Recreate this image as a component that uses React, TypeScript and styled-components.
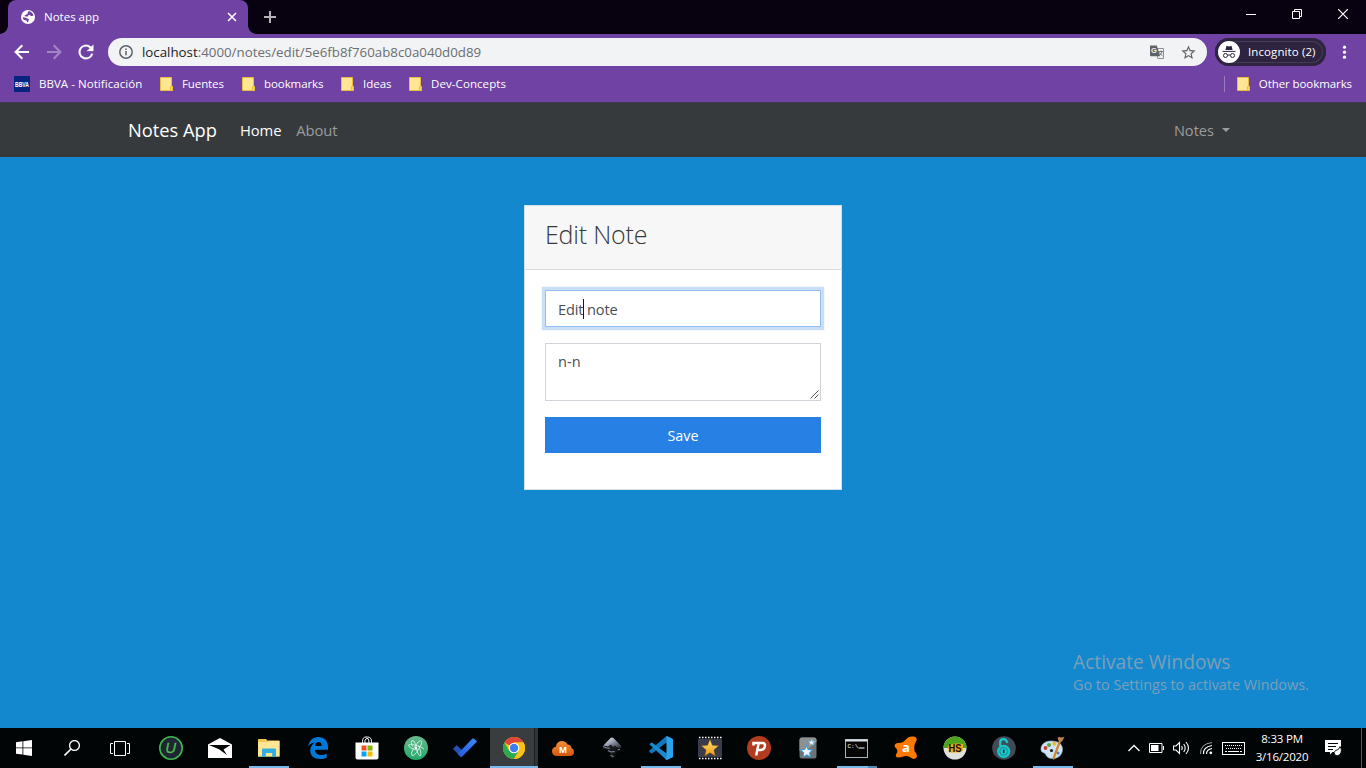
import React from 'react';
import styled, { createGlobalStyle } from 'styled-components';

const GlobalStyle = createGlobalStyle`
  * { box-sizing: border-box; }
  body {
    margin: 0;
    overflow: hidden;
    font-family: "Open Sans", "Noto Sans", sans-serif;
  }
  svg { display: block; flex: none; }
`;

const Screen = styled.div`
  position: relative;
  display: flex;
  flex-direction: column;
  width: 1366px;
  height: 768px;
  background: #1488cf;
`;

/* ---------- Browser ---------- */

const TitleBar = styled.header`
  display: flex;
  height: 34px;
  background: #080210;
  color: #fff;
`;

const Tab = styled.div`
  position: relative;
  display: flex;
  align-items: center;
  width: 240px;
  margin-left: 8px;
  padding: 0 10px 0 13px;
  background: #6f42a3;
  border-radius: 8px 8px 0 0;

  &::before,
  &::after {
    content: '';
    position: absolute;
    bottom: 0;
    width: 8px;
    height: 8px;
  }
  &::before {
    left: -8px;
    background: radial-gradient(circle at 0 0, transparent 7.5px, #6f42a3 8px);
  }
  &::after {
    right: -8px;
    background: radial-gradient(circle at 100% 0, transparent 7.5px, #6f42a3 8px);
  }
`;

const TabTitle = styled.span`
  flex: 1;
  margin-left: 9px;
  padding-bottom: 2px;
  font-size: 11.5px;
`;

const NewTab = styled.div`
  display: flex;
  align-items: center;
  margin-left: 15px;
`;

const WindowButtons = styled.div`
  display: flex;
  margin-left: auto;
`;

const WindowButton = styled.div`
  display: flex;
  justify-content: center;
  width: 46px;
  padding-top: 9px;
`;

const Toolbar = styled.div`
  display: flex;
  align-items: center;
  height: 36px;
  padding-left: 11px;
  background: #6f42a3;
  color: #fff;
`;

const NavButtons = styled.div`
  display: flex;
  gap: 10px;
  margin-right: 11px;
`;

const AddressBar = styled.div`
  display: flex;
  align-items: center;
  width: 1099px;
  height: 28px;
  padding: 0 10px;
  border-radius: 14px;
  background: #f1f3f4;
  color: #5f6368;
`;

const Url = styled.span`
  flex: 1;
  margin-left: 8px;
  color: #6b6e72;
  font-size: 13.3px;
  line-height: 20px;

  b {
    color: #202124;
    font-weight: 400;
  }
`;

const OmniboxActions = styled.div`
  display: flex;
  align-items: center;
  gap: 15px;
`;

const IncognitoPill = styled.div`
  display: flex;
  align-items: center;
  width: 111px;
  height: 28px;
  margin: 0 10px 0 8px;
  padding: 0 3px;
  border-radius: 14px;
  background: #2e2440;
  box-shadow: inset 0 0 0 3px #2e2440, inset 0 0 0 4px #453b57;
`;

const IncognitoLabel = styled.span`
  padding-bottom: 2px;
  font-size: 11.5px;
  letter-spacing: 0.1px;
`;

const IncognitoBadge = styled.div`
  display: flex;
  align-items: center;
  justify-content: center;
  width: 22px;
  height: 22px;
  margin-right: 8px;
  border-radius: 50%;
  background: #fff;
`;

const BookmarksBar = styled.div`
  display: flex;
  height: 32px;
  padding: 0 14px;
  background: #6f42a3;
`;

const Bookmark = styled.div<{ $width?: number }>`
  display: flex;
  align-items: center;
  gap: 9px;
  height: 28px;
  width: ${(p) => (p.$width ? `${p.$width}px` : 'auto')};
`;

const BookmarkLabel = styled.span<{ $spacing?: number }>`
  padding-bottom: 2px;
  color: #fff;
  font-size: 11.5px;
  letter-spacing: ${(p) => p.$spacing ?? 0}px;
  white-space: nowrap;
`;

const BookmarkDivider = styled.div`
  width: 1px;
  height: 16px;
  margin: 6px 12px 0 auto;
  background: #9a7bc0;
`;

/* ---------- Page ---------- */

const Navbar = styled.nav`
  display: flex;
  align-items: center;
  height: 55px;
  padding: 0 136px 0 128px;
  border-top: 1px solid #41374e;
  background: #373a3c;
`;

const Brand = styled.span`
  width: 112px;
  padding-bottom: 2px;
  color: #fff;
  font-size: 18.3px;
`;

const NavLink = styled.span<{ $active?: boolean }>`
  margin-right: 15px;
  color: ${(p) => (p.$active ? '#fff' : '#9b9c9d')};
  font-size: 14.8px;
  letter-spacing: -0.12px;
`;

const NavDropdown = styled.div`
  display: flex;
  align-items: center;
  gap: 8px;
  margin-left: auto;
  color: #9b9c9d;
  font-size: 14.6px;
`;

const Caret = styled.i`
  border: 4.5px solid transparent;
  border-top-color: #9b9c9d;
  border-bottom: 0;
`;

const Main = styled.main`
  display: flex;
  flex: 1;
  align-items: flex-start;
  justify-content: center;
  padding-top: 48px;
`;

const Card = styled.section`
  width: 318px;
  height: 285px;
  border: 1px solid #d3dfe6;
  background: #fff;
`;

const CardHeader = styled.header`
  height: 64px;
  padding: 11px 20px;
  border-bottom: 1px solid #d9dadb;
  background: #f7f7f7;
`;

const CardTitle = styled.h4`
  margin: 0;
  color: #373a3c;
  font-size: 25px;
  font-weight: 300;
  line-height: 34px;
  letter-spacing: -0.2px;
`;

const CardBody = styled.div`
  display: flex;
  flex-direction: column;
  gap: 16px;
  padding: 20px;
`;

const Field = styled.div<{ $height: number; $focused?: boolean }>`
  position: relative;
  display: flex;
  height: ${(p) => p.$height}px;
  padding: ${(p) => (p.$focused ? 6 : 5)}px 12px;
  border: 1px solid ${(p) => (p.$focused ? '#93c0f1' : '#ced4da')};
  background: #fff;
  box-shadow: ${(p) => (p.$focused ? '0 0 0 3.2px rgba(39, 128, 227, 0.25)' : 'none')};
  color: #495057;
  font-size: 14.6px;
  line-height: 24px;
  letter-spacing: ${(p) => (p.$focused ? -0.15 : 0)}px;
  white-space: pre;
`;

const TextCaret = styled.i`
  width: 1px;
  height: 20px;
  margin: 2px -1px 0 0;
  background: #16181a;
`;

const ResizeGrip = styled.svg`
  position: absolute;
  right: 1px;
  bottom: 1px;
`;

const SaveButton = styled.div`
  height: 36px;
  background: #2780e3;
  color: #fff;
  font-size: 14.4px;
  line-height: 37px;
  text-align: center;
`;

const Watermark = styled.div`
  position: absolute;
  top: 649px;
  left: 1073px;
  color: #7b9fb8;
  font-size: 14.4px;
  line-height: 20px;
  white-space: nowrap;

  strong {
    display: block;
    font-size: 19.2px;
    font-weight: 400;
    line-height: 26px;
  }
`;

/* ---------- Taskbar ---------- */

const Taskbar = styled.footer`
  display: flex;
  height: 40px;
  background: #020505;
  color: #fff;
`;

const SystemButton = styled.div`
  display: flex;
  align-items: center;
  justify-content: center;
  width: 48px;
`;

const Apps = styled.div`
  display: flex;
  margin-left: 2px;
`;

const AppButton = styled.div<{ $running?: boolean; $active?: boolean; $stacked?: boolean }>`
  position: relative;
  display: flex;
  align-items: center;
  justify-content: center;
  width: 49px;

  &::before {
    content: '';
    position: absolute;
    z-index: 0;
    inset: 0 0 0 ${(p) => (p.$active ? '1px' : '0')};
    background: ${(p) => (p.$active ? 'linear-gradient(90deg, #393d3f 44px, #1c2022 44px, #1c2022 45px, #303435 45px)' : 'none')};
  }
  &::after {
    content: '';
    position: absolute;
    bottom: 0;
    left: ${(p) => (p.$active ? 1 : 5)}px;
    right: ${(p) => (p.$active ? 0 : 4)}px;
    height: 2px;
    display: ${(p) => (p.$running ? 'block' : 'none')};
    background: ${(p) => (p.$stacked ? 'linear-gradient(270deg, #5388ba 9px, #76b9ed 9px)' : '#76b9ed')};
  }
  svg { position: relative; }
`;

const Tray = styled.div`
  display: flex;
  align-items: center;
  margin-left: auto;
`;

const TrayIcons = styled.div`
  display: flex;
  align-items: center;
  gap: 9px;
`;

const Clock = styled.div`
  width: 74px;
  padding-bottom: 1px;
  font-size: 11.5px;
  line-height: 18px;
  letter-spacing: -0.2px;
  text-align: center;
`;

const Notifications = styled.div`
  margin-left: 6px;
  margin-right: 19px;
`;

const ShowDesktop = styled.div`
  width: 5px;
  height: 40px;
  border-left: 1px solid #56595a;
`;

/* ---------- Icons ---------- */

const GlobeIcon = () => (
  <svg width="14" height="14" viewBox="0 0 14 14">
    <circle cx="7" cy="7" r="7" fill="#fff" />
    <path
      d="M7 1.500Q9.400.8 11.400 3.200L12.500 5.200Q11 6.600 9.600 5.800L8.800 4.800 7 5.400 7.200 6.600H5L3 6 4.200 5.200 6.800 3.600Z"
      fill="#6f42a3"
    />
    <path d="M1.600 7.200 5 7.800 7.900 9.200 7.600 10.800 6.400 12.600 5.400 10.600 2.600 9.800Z" fill="#6f42a3" />
  </svg>
);

const FolderIcon = () => (
  <svg width="13" height="14" viewBox="0 0 13 14">
    <path d="M.5.5h11v9h1v4H.5z" fill="#ffe692" stroke="#e9bd3d" />
    <path d="M10.500 13.500v-4h2v4z" fill="#fbd765" stroke="#e9bd3d" />
  </svg>
);

const BbvaIcon = () => (
  <svg width="16" height="16" viewBox="0 0 16 16" overflow="visible">
    <rect width="16" height="16" fill="#072481" />
    <text x="1" y="10.800" fill="#fff" fontFamily="Liberation Sans, sans-serif" fontSize="7" fontWeight="700" textLength="14" lengthAdjust="spacingAndGlyphs">
      BBVA
    </text>
  </svg>
);

const IncognitoIcon = () => (
  <svg width="14" height="14" viewBox="0 0 14 14" fill="none">
    <path d="M3.400 5 4.500.8 7 1.400 9.500.8 10.600 5Z" fill="#2e2440" />
    <path d="M.5 6.400h13" stroke="#2e2440" strokeWidth="1" />
    <circle cx="3.500" cy="10.500" r="2" stroke="#2e2440" />
    <circle cx="10.500" cy="10.500" r="2" stroke="#2e2440" />
    <path d="M5.500 10.300q1.500-.8 3 0" stroke="#2e2440" />
  </svg>
);

const TranslateIcon = () => (
  <svg width="16" height="16" viewBox="0 0 16 16">
    <path d="M6.500 4.500h8v10H8.800z" fill="#f1f3f4" stroke="#8b8e92" />
    <path d="M1.500 1.500h6.300l3.400 10.800H1.500Q1 12 1 11.300V2Q1 1.500 1.500 1.500Z" fill="#5f6368" />
    <text x="5" y="9.400" fill="#f1f3f4" fontFamily="Liberation Sans, sans-serif" fontSize="7.500" fontWeight="700" textAnchor="middle">G</text>
    <path d="M9.500 7.500h4.500M11.800 6.500v1M13 7.800Q12.500 10 10.500 11.200M10.500 8.500q1 2 3 3.200" fill="none" stroke="#777a7e" />
  </svg>
);

const WindowsIcon = () => (
  <svg width="16" height="16" viewBox="0 0 16 16" fill="#fff">
    <path d="M0 2.200 6.500 1.300V7.500H0zM7.300 1.200 16 0V7.500H7.300zM0 8.300H6.500V14.600L0 13.700zM7.300 8.300H16V16L7.300 14.800z" />
  </svg>
);

const SearchIcon = () => (
  <svg width="16" height="16" viewBox="0 0 16 16" fill="none" stroke="#fff" strokeWidth="1.300">
    <circle cx="10.500" cy="5.500" r="4.900" />
    <path d="M7 9 .5 15.500" strokeWidth="1.600" />
  </svg>
);

const TaskViewIcon = () => (
  <svg width="20" height="15" viewBox="0 0 20 15" fill="none" stroke="#fff">
    <path d="M4.500.5h11v14h-11zM3 2.500H.5v10H3M17 2.500h2.500v10H17" />
  </svg>
);

const UninstallerIcon = () => (
  <svg width="24" height="24" viewBox="0 0 24 24">
    <circle cx="12" cy="12" r="11.200" fill="#202435" stroke="#3cb94b" strokeWidth="1.600" />
    <text x="11.700" y="17.300" fill="#49bf45" stroke="#49bf45" strokeWidth=".3" fontFamily="Liberation Sans, sans-serif" fontSize="15" fontStyle="italic" textAnchor="middle">U</text>
  </svg>
);

const MailIcon = () => (
  <svg width="24" height="20" viewBox="0 0 24 20">
    <path d="M0 6.500 12 0 24 6.500V20H0z" fill="#fff" />
    <path d="M1 7H22.500L15.500 11.500 19 17 11 11.200z" fill="#020505" />
  </svg>
);

const ExplorerIcon = () => (
  <svg width="22" height="20" viewBox="0 0 22 20">
    <path d="M0 1.500Q0 1 .600 1H8L9.500 2.500H21Q21.500 2.500 21.500 3V18.500H0z" fill="#f3c74d" />
    <path d="M0 4H10L11.500 3H21.500V18.500H0z" fill="#ffe695" />
    <path d="M4 19V11.500Q4 10.500 5 10.500H17Q18 10.500 18 11.500V19H14.200V15H7.800V19z" fill="#32ade2" />
  </svg>
);

const EdgeIcon = () => (
  <svg width="20" height="22" viewBox="0 0 20 22">
    <path
      d="M.2 9.300C1.200 3.500 5 0 10.300 0 16.300 0 20 4.200 20 10v2.800H6.900C7 16.500 9.800 18 13 18c2.200 0 4-.6 5.700-1.600v4.100C16.900 21.500 14.800 22 12.200 22 6 22 2.200 18.600 2.200 13.500c0-3.600 2-6.600 5-8C4.500 5.700 2 7 .2 9.300ZM7 8.900h6.700C13.700 6.500 12.500 5 10.500 5 8.600 5 7.300 6.500 7 8.900Z"
      fill="#0078d7"
    />
  </svg>
);

const StoreIcon = () => (
  <svg width="24" height="24" viewBox="0 0 24 24">
    <path d="M7.500 8V5.500Q7.500 1 11 1h1.500Q16.500 1 16.500 5.500V8M10 7V4.500Q10.500 2 13 2.500 14 3 14 7" fill="none" stroke="#fff" />
    <path d="M.5 6.500H23.500V21.500Q23.500 23.500 21.500 23.500H2.500Q.5 23.500.5 21.500z" fill="#fff" />
    <path d="M6.500 9.500h5v5h-5z" fill="#f25022" />
    <path d="M12.500 9.500h5v5h-5z" fill="#7fba00" />
    <path d="M6.500 15.500h5v5h-5z" fill="#00a4ef" />
    <path d="M12.500 15.500h5v5h-5z" fill="#ffb900" />
  </svg>
);

const AtomIcon = () => (
  <svg width="24" height="24" viewBox="0 0 24 24">
    <defs>
      <linearGradient id="atom" x2="0" y2="1">
        <stop stopColor="#67b890" />
        <stop offset="1" stopColor="#22aa68" />
      </linearGradient>
    </defs>
    <circle cx="12" cy="12" r="12" fill="url(#atom)" />
    <g fill="none" stroke="#d6f1e2" strokeWidth=".9" strokeLinejoin="round">
      <path d="M8 4.500Q10.500 4 11.500 8.500L13 14.500Q14 19 16 20 17.500 19 16.500 15L14.500 9.500" />
      <path d="M16.500 4.500Q19 5.500 16.500 10L12.500 16.500Q9.500 20.500 8 19.500 6.500 17.500 9 13.500L12 9Q14.500 5 16.500 4.500" />
      <path d="M4.500 9Q5.500 7.500 10.500 9L16 10.500Q20 12 19.500 13.500M4.500 9Q4.500 11.500 9 13L14 14" />
      <path d="M8 4.500Q6.500 6 8.500 10.500" />
    </g>
    <circle cx="12" cy="12" r="1.200" fill="#fff" />
  </svg>
);

const TodoIcon = () => (
  <svg width="24" height="20" viewBox="0 0 24 20">
    <defs>
      <linearGradient id="todo" x1="0" y1="1" x2="1" y2="0">
        <stop stopColor="#2359d8" />
        <stop offset="1" stopColor="#3c8aff" />
      </linearGradient>
    </defs>
    <path d="M3.200 7.400Q3.700 7 4.100 7.400L11 14.300 7.800 18.800.3 11.200Q0 10.900.3 10.500z" fill="#2450b8" />
    <path d="M19.500.4Q20 0 20.500.4L23.700 3Q24 3.400 23.600 3.900L9 18.800Q8.200 19.500 7.300 18.500L4.600 15.700z" fill="url(#todo)" />
  </svg>
);

const ChromeIcon = () => (
  <svg width="22" height="22" viewBox="0 0 22 22">
    <circle cx="11" cy="11" r="11" fill="#fbc116" />
    <path d="M11 11 1.470 5.500A11 11 0 0 1 20.530 5.500H11z" fill="#e0453a" />
    <path d="M1.470 5.500A11 11 0 0 0 11 22L15.760 13.750 11 11 6.240 13.750z" fill="#2da94f" />
    <path d="M20.530 5.500A11 11 0 0 1 11 22L15.760 13.750 11 5.500z" fill="#fbc116" />
    <circle cx="11" cy="11" r="5.300" fill="#fff" />
    <circle cx="11" cy="11" r="4.200" fill="#3d7df0" />
  </svg>
);

const CloudIcon = () => (
  <svg width="22" height="15" viewBox="0 0 22 15">
    <defs>
      <linearGradient id="cloud" x2="0" y2="1">
        <stop stopColor="#f3903a" />
        <stop offset="1" stopColor="#d4570b" />
      </linearGradient>
    </defs>
    <path d="M5 15Q0 14.800 0 10.200 0 6.500 4 5.500 4.500.5 9.500 0 14 0 15.500 3.500 19 3.500 19.500 7 22 8 22 11 22 14.700 18 15z" fill="url(#cloud)" />
    <text x="11" y="12.200" fill="#fff" fontFamily="Liberation Sans, sans-serif" fontSize="9.500" fontWeight="700" textAnchor="middle">M</text>
  </svg>
);

const InkscapeIcon = () => (
  <svg width="20" height="22" viewBox="0 0 20 22">
    <defs>
      <linearGradient id="ink" x2="1" y2="1">
        <stop stopColor="#fff" />
        <stop offset=".5" stopColor="#8d94a8" />
        <stop offset="1" stopColor="#22252c" />
      </linearGradient>
    </defs>
    <path d="M8.600 1Q10 0 11.400 1L19 8.800Q20.500 11 18 12L13.500 13 15.500 15 12 17.500 14 18.800 10.500 21.500 7.500 19 8.500 16 4.500 14.500 7.500 13 1.500 11.800Q-.5 10.800 1 8.800z" fill="#17191d" />
    <path d="M8.600 1Q10 0 11.400 1L19 8.800 18.500 11 14.500 10 13 8.500 11 10 9 7.500 6 9.500 1.500 8.400z" fill="url(#ink)" />
    <path d="M1 9.500Q5 11.800 8 11.200M6 13.500Q9 16 12.500 14.500M8.500 18.500 11.500 19.500M15.500 13 18 12.500" fill="none" stroke="#9aa0ac" strokeWidth=".9" />
  </svg>
);

const VsCodeIcon = () => (
  <svg width="24" height="24" viewBox="0 0 24 24">
    <path d="M17.500 0 23 2.500Q24 3 24 4V6L17.500 6.500 3.300 17.300Q2.700 17.800 2.100 17.300L.4 15.700Q-.2 15 .4 14.400z" fill="#0e77bd" />
    <path d="M.4 8.300 2.100 6.700Q2.700 6.200 3.300 6.700L17.500 17.500 24 18V20Q24 21 23 21.500L17.500 24z" fill="#178bd2" />
    <path d="M17.500 0 23 2.500Q24 3 24 4V20Q24 21 23 21.500L17.500 24 16.500 23 17.500 21V3z" fill="#29a3ee" />
  </svg>
);

const VideoEditorIcon = () => (
  <svg width="24" height="24" viewBox="0 0 24 24">
    <defs>
      <linearGradient id="star" x2="0" y2="1">
        <stop stopColor="#ffe36d" />
        <stop offset="1" stopColor="#f09a17" />
      </linearGradient>
    </defs>
    <rect width="24" height="24" fill="#0a0a0e" />
    <rect y="3" width="24" height="18" fill="#3a3c4b" />
    <path d="M1 1.500H24M1 22.500H24" stroke="#fff" strokeWidth="1.500" strokeDasharray="1.500 1.500" />
    <path d="M12 3.500 14.400 9.300 20.600 9.800 15.900 13.900 17.300 20 12 16.700 6.700 20 8.100 13.900 3.400 9.800 9.600 9.300z" fill="url(#star)" stroke="#7a4b12" strokeWidth=".4" />
  </svg>
);

const PsiphonIcon = () => (
  <svg width="24" height="24" viewBox="0 0 24 24" fill="none">
    <circle cx="12" cy="12" r="12" fill="#b23c1f" />
    <path d="M6.500 9.500V7H15.500Q18.500 7 17.800 10.500 17 14 13.500 14H10.500M11.700 7 9.200 19.500" stroke="#fff" strokeWidth="2.500" />
  </svg>
);

const AnkiIcon = () => (
  <svg width="18" height="22" viewBox="0 0 18 22">
    <rect x=".5" y=".5" width="17" height="21" rx="2.500" fill="#6e7374" />
    <path d="M.5 3Q.5.5 3 .5H15Q17.500.5 17.500 3V5Q10 14 .5 14z" fill="#8b9091" />
    <path d="M7.500 8.500 9 12.500 13.500 13 10.500 15.800 11.500 20 7.800 17.800 4 20 4.800 15.700 1.500 12.900 5.800 12.500z" fill="#e9f6ff" stroke="#2c9de8" />
    <path d="M12.700 2.500 13.500 4.300 15.800 4.500 14.200 6 14.500 8 12.500 7 10.700 8 11 6 9.500 4.500 11.700 4.300z" fill="#e9f6ff" stroke="#69bdf0" strokeWidth=".6" />
  </svg>
);

const TerminalIcon = () => (
  <svg width="23" height="19" viewBox="0 0 23 19">
    <rect x=".5" y=".5" width="22" height="18" fill="#060606" stroke="#a9b4c0" />
    <path d="M.5 1.500h22" stroke="#dbe3ea" strokeWidth="2" />
    <text x="2.500" y="9.300" fill="#fff" fontFamily="Liberation Mono, monospace" fontSize="6">C:\</text>
    <path d="M13.500 9h6" stroke="#fff" />
  </svg>
);

const AvastIcon = () => (
  <svg width="24" height="24" viewBox="0 0 24 24">
    <path d="M19 .5Q22.500.5 22.800 3.500 22.500 5 21 7.500 19.500 11 20.500 15 24 19 22.500 21.500 20.500 24 17.500 22 14 19.500 10.500 20.200 6.500 21.500 3.500 21.500 1 20.800 2.200 18 5.300 14.500.8 11 0 7.500 3.500 7 8.500 7.500 11.500 3.800 14.500 0 19 .5z" fill="#ff7800" />
    <text x="12" y="15.800" fill="#fff" fontFamily="Open Sans, sans-serif" fontSize="13" fontWeight="700" textAnchor="middle">a</text>
  </svg>
);

const HotspotIcon = () => (
  <svg width="24" height="24" viewBox="0 0 24 24">
    <circle cx="12" cy="12" r="11.500" fill="#dfe2da" />
    <path d="M.5 12A11.500 11.500 0 0 1 23.500 12Z" fill="#4da51d" />
    <path d="M5 10Q9 6.500 20 8L20 14.500 17 16.500H6z" fill="#f6a51d" />
    <text x="12" y="15.800" fill="#16120a" fontFamily="Liberation Sans, sans-serif" fontSize="10.500" fontWeight="700" textAnchor="middle" textLength="13" lengthAdjust="spacingAndGlyphs">HS</text>
  </svg>
);

const OpenLockIcon = () => (
  <svg width="24" height="24" viewBox="0 0 24 24" fill="none">
    <circle cx="12" cy="12" r="11.800" fill="#414b56" />
    <path d="M8.200 10V6.200Q8.200 3.200 11.500 3.200 14.500 3.200 15.300 7" stroke="#17c8cf" strokeWidth="2.200" />
    <circle cx="11.700" cy="15.300" r="6.600" fill="#17c8cf" />
    <circle cx="11.700" cy="15.300" r="4" stroke="#2b7d87" strokeWidth=".9" />
    <path d="M11.700 13.500v3.500" stroke="#24343c" strokeWidth="1.700" />
  </svg>
);

const PaintIcon = () => (
  <svg width="25" height="24" viewBox="0 0 25 24">
    <path d="M11 5C4 5 .5 9.500 1 14c.5 3 3.500 2.500 4.500 4C6.500 21 9 23 13.500 22.500 19.500 22 22.500 18 22.500 13 22.500 8 18 5 11 5Z" fill="#cfe4f4" stroke="#8fb5d1" strokeWidth=".6" />
    <circle cx="5.500" cy="12" r="1.900" fill="#cf3b2d" />
    <circle cx="9" cy="9" r="2" fill="#57a83c" />
    <circle cx="14.300" cy="7.800" r="2" fill="#edb82b" />
    <circle cx="11.500" cy="14.500" r="1.600" fill="#182028" />
    <circle cx="18" cy="17" r="1.500" fill="#3c83cf" />
    <path d="M20 5 13.500 22.500" stroke="#d5832d" strokeWidth="2.200" strokeLinecap="round" />
    <path d="M17.500 2Q19 .5 21 1.500L24.500 1 22 5.500 19 5.500z" fill="#b98654" />
  </svg>
);

const BatteryIcon = () => (
  <svg width="15" height="10" viewBox="0 0 15 10">
    <path d="M.5.5h12.500v9H.5zM14.500 3v4" fill="none" stroke="#fff" />
    <path d="M2 2h7.500v6H2z" fill="#fff" />
  </svg>
);

const VolumeIcon = () => (
  <svg width="17" height="14" viewBox="0 0 17 14" fill="none" stroke="#fff" strokeWidth="1.100">
    <path d="M.5 5H3L6.500 1.500v11L3 9H.5zM8.500 5q1.500 2 0 4M10.700 3q3 4 0 8M13 1q5 6 0 12" />
  </svg>
);

const WifiIcon = () => (
  <svg width="14" height="14" viewBox="0 0 14 14" fill="none" stroke="#fff">
    <path d="M1.500 13Q1 3 13 1.500" stroke="#a3a5a5" />
    <path d="M4.500 13Q4 6 13 4.500M7.500 13Q7.500 8.500 13 7.500" strokeWidth="1.200" />
    <circle cx="11.800" cy="11.800" r="1.400" fill="#fff" stroke="none" />
  </svg>
);

const KeyboardIcon = () => (
  <svg width="23" height="13" viewBox="0 0 23 13" fill="none" stroke="#fff">
    <rect x=".5" y=".5" width="22" height="12" />
    <path d="M3 3.500h17M4 6.500h16" strokeDasharray="1 1" />
    <path d="M3 9.500h2M6 9.500h11M18 9.500h2" />
  </svg>
);

const NotificationIcon = () => (
  <svg width="17" height="16" viewBox="0 0 17 16">
    <path d="M0 0h16v12H7.500L5 14.500V12H0z" fill="#fff" />
    <path d="M3 3.500h10M3 6.500h8M3 9.500h5" stroke="#020505" />
    <path d="M10.500 15.500Q7.500 12.500 10.500 10.500 14 10.500 15 6.500 18 11 14.500 15 12.500 16 10.500 15.500z" fill="#fff" stroke="#020505" strokeWidth=".9" />
  </svg>
);

const bookmarks = [
  { label: 'Fuentes', width: 82, spacing: -0.1 },
  { label: 'bookmarks', width: 99, spacing: -0.08 },
  { label: 'Ideas', width: 68, spacing: 0 },
  { label: 'Dev-Concepts', width: 120, spacing: 0.08 },
];

const apps = [
  { id: 'uninstaller', icon: <UninstallerIcon /> },
  { id: 'mail', icon: <MailIcon /> },
  { id: 'explorer', icon: <ExplorerIcon />, running: true },
  { id: 'edge', icon: <EdgeIcon /> },
  { id: 'store', icon: <StoreIcon /> },
  { id: 'atom', icon: <AtomIcon /> },
  { id: 'todo', icon: <TodoIcon /> },
  { id: 'chrome', icon: <ChromeIcon />, running: true, active: true },
  { id: 'cloud', icon: <CloudIcon /> },
  { id: 'inkscape', icon: <InkscapeIcon /> },
  { id: 'vscode', icon: <VsCodeIcon />, running: true },
  { id: 'video', icon: <VideoEditorIcon /> },
  { id: 'psiphon', icon: <PsiphonIcon /> },
  { id: 'anki', icon: <AnkiIcon /> },
  { id: 'terminal', icon: <TerminalIcon />, running: true, stacked: true },
  { id: 'avast', icon: <AvastIcon /> },
  { id: 'hotspot', icon: <HotspotIcon /> },
  { id: 'lock', icon: <OpenLockIcon /> },
  { id: 'paint', icon: <PaintIcon />, running: true },
];

export default function App() {
  return (
    <>
      <GlobalStyle />
      <Screen>
        <TitleBar>
          <Tab>
            <GlobeIcon />
            <TabTitle>Notes app</TabTitle>
            <svg width="12" height="12" viewBox="0 0 12 12" stroke="#fff" strokeWidth="1.500">
              <path d="M2 2l8 8M10 2l-8 8" />
            </svg>
          </Tab>
          <NewTab>
            <svg width="14" height="14" viewBox="0 0 14 14" stroke="#b5b3b8" strokeWidth="2">
              <path d="M7 1v12M1 7h12" />
            </svg>
          </NewTab>
          <WindowButtons>
            <WindowButton>
              <svg width="10" height="10" viewBox="0 0 10 10" stroke="#fff"><path d="M0 5.500h10" /></svg>
            </WindowButton>
            <WindowButton>
              <svg width="10" height="10" viewBox="0 0 10 10" fill="none" stroke="#fff">
                <path d="M.5 2.500h7v7h-7zM2.500 2.500v-2h7v7h-2" />
              </svg>
            </WindowButton>
            <WindowButton>
              <svg width="10" height="10" viewBox="0 0 10 10" stroke="#fff" strokeWidth="1.200"><path d="M0 0l10 10M10 0L0 10" /></svg>
            </WindowButton>
          </WindowButtons>
        </TitleBar>

        <Toolbar>
          <NavButtons>
            <svg width="22" height="22" viewBox="0 0 22 22" fill="none" stroke="#fff" strokeWidth="2">
              <path d="M18 11H5M11.300 4.300 4.600 11l6.700 6.700" />
            </svg>
            <svg width="22" height="22" viewBox="0 0 22 22" fill="none" stroke="#a486c8" strokeWidth="2">
              <path d="M4 11H17M10.700 4.300 17.400 11l-6.700 6.700" />
            </svg>
            <svg width="22" height="22" viewBox="0 0 24 24" fill="#fff">
              <path d="M17.650 6.350A8 8 0 1 0 19.730 14H17.650A6 6 0 1 1 12 6c1.660 0 3.140.69 4.220 1.780L13 11h7V4z" stroke="#fff" strokeWidth=".3" />
            </svg>
          </NavButtons>
          <AddressBar>
            <svg width="16" height="16" viewBox="0 0 16 16" fill="none" stroke="#5f6368" strokeWidth="1.500">
              <circle cx="8" cy="8" r="6.200" />
              <path d="M8 7v4.200M8 4.500v1.500" />
            </svg>
            <Url><b>localhost</b>:4000/notes/edit/5e6fb8f760ab8c0a040d0d89</Url>
            <OmniboxActions>
              <TranslateIcon />
              <svg width="17" height="17" viewBox="0 0 24 24" fill="#5f6368">
                <path d="M22 9.240l-7.190-.62L12 2 9.190 8.630 2 9.240l5.460 4.730L5.820 21 12 17.270 18.180 21l-1.630-7.030zM12 15.400l-3.760 2.270 1-4.280-3.320-2.880 4.380-.38L12 6.100l1.710 4.040 4.380.38-3.320 2.880 1 4.280z" />
              </svg>
            </OmniboxActions>
          </AddressBar>
          <IncognitoPill>
            <IncognitoBadge><IncognitoIcon /></IncognitoBadge>
            <IncognitoLabel>Incognito (2)</IncognitoLabel>
          </IncognitoPill>
          <svg width="16" height="16" viewBox="0 0 16 16" fill="#fff">
            <circle cx="8.500" cy="3.200" r="1.600" />
            <circle cx="8.500" cy="8.200" r="1.600" />
            <circle cx="8.500" cy="13.200" r="1.600" />
          </svg>
        </Toolbar>

        <BookmarksBar>
          <Bookmark $width={146}>
            <BbvaIcon />
            <BookmarkLabel $spacing={0.05}>BBVA - Notificación</BookmarkLabel>
          </Bookmark>
          {bookmarks.map((b) => (
            <Bookmark key={b.label} $width={b.width}>
              <FolderIcon />
              <BookmarkLabel $spacing={b.spacing}>{b.label}</BookmarkLabel>
            </Bookmark>
          ))}
          <BookmarkDivider />
          <Bookmark>
            <FolderIcon />
            <BookmarkLabel $spacing={-0.08}>Other bookmarks</BookmarkLabel>
          </Bookmark>
        </BookmarksBar>

        <Navbar>
          <Brand>Notes App</Brand>
          <NavLink $active>Home</NavLink>
          <NavLink>About</NavLink>
          <NavDropdown>Notes<Caret /></NavDropdown>
        </Navbar>

        <Main>
          <Card>
            <CardHeader><CardTitle>Edit Note</CardTitle></CardHeader>
            <CardBody>
              <Field $height={37} $focused>Edit<TextCaret /> note</Field>
              <Field $height={58}>
                n-n
                <ResizeGrip width="9" height="9" viewBox="0 0 9 9" stroke="#55585b">
                  <path d="M.5 8.500l8-8M4.500 8.500l4-4" />
                </ResizeGrip>
              </Field>
              <SaveButton>Save</SaveButton>
            </CardBody>
          </Card>
        </Main>

        <Watermark>
          <strong>Activate Windows</strong>
          Go to Settings to activate Windows.
        </Watermark>

        <Taskbar>
          <SystemButton><WindowsIcon /></SystemButton>
          <SystemButton><SearchIcon /></SystemButton>
          <SystemButton><TaskViewIcon /></SystemButton>
          <Apps>
            {apps.map((a) => (
              <AppButton key={a.id} $running={a.running} $active={a.active} $stacked={a.stacked}>
                {a.icon}
              </AppButton>
            ))}
          </Apps>
          <Tray>
            <TrayIcons>
              <svg width="12" height="8" viewBox="0 0 12 8" fill="none" stroke="#fff" strokeWidth="1.300">
                <path d="M.5 7 6 1.500 11.500 7" />
              </svg>
              <BatteryIcon />
              <VolumeIcon />
              <WifiIcon />
              <KeyboardIcon />
            </TrayIcons>
            <Clock>8:33 PM<br />3/16/2020</Clock>
            <Notifications><NotificationIcon /></Notifications>
            <ShowDesktop />
          </Tray>
        </Taskbar>
      </Screen>
    </>
  );
}
